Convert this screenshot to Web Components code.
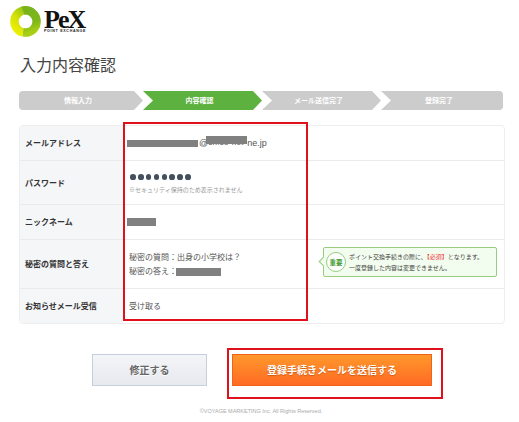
<!DOCTYPE html>
<html lang="ja"><head><meta charset="utf-8">
<style>
html,body{margin:0;padding:0;background:#fff}
body{font-family:"Liberation Sans","Noto Sans CJK JP",sans-serif;color:#444;width:519px;height:422px;overflow:hidden}
</style></head><body>
<pex-page></pex-page>
<script>
function def(name,css,html){
  customElements.define(name,class extends HTMLElement{
    constructor(){super();const r=this.attachShadow({mode:'open'});r.innerHTML='<style>'+css+'</style>'+html;}
  });
}
def('pex-logo',`:host{display:flex;align-items:flex-start;gap:3px;padding:6px 0 0 10px;height:33px}
 svg{display:block;flex:none}
 .w{display:flex;flex-direction:column;padding-top:2px}
 .p{font:bold 26px/24px "Liberation Serif",serif;color:#111;letter-spacing:-2px}
 .s{font:bold 3.6px/5px "Liberation Sans",sans-serif;color:#222;letter-spacing:.7px;white-space:nowrap;margin-top:-3px}`,
 `<svg width="31" height="31" viewBox="0 0 31 31"><defs>
   <linearGradient id="a" x1="0" y1="1" x2=".6" y2="0"><stop offset="0" stop-color="#eff000"/><stop offset=".55" stop-color="#d4e208"/><stop offset="1" stop-color="#a3cb12"/></linearGradient>
   <linearGradient id="b" x1=".3" y1="0" x2=".5" y2="1"><stop offset="0" stop-color="#79b31c"/><stop offset=".6" stop-color="#7fb71b"/><stop offset="1" stop-color="#a8cf14"/></linearGradient></defs>
   <path d="M17 4.4A11.2 11.2 0 0 0 13 26.4" fill="none" stroke="url(#a)" stroke-width="8.5"/>
   <path d="M13 4.7C14 4.3 15 4.3 15.5 4.3A11.2 11.2 0 0 1 17.5 26.5C16 26.7 15 26.7 13 26.4" fill="none" stroke="url(#b)" stroke-width="8.5"/>
 </svg>
 <div class="w"><div class="p">PeX</div><div class="s">POINT EXCHANGE</div></div>`);
def('pex-title',`:host{display:block;margin:13px 0 0 20px;font:400 16px/24px "Noto Sans CJK JP",sans-serif;color:#444}`,`<slot></slot>`);
def('pex-steps',`:host{display:flex;margin:15px 0 0 19px;width:484px;height:19px}`,`<slot></slot>`);
def('pex-step',`:host{display:flex;align-items:center;justify-content:center;box-sizing:border-box;flex:0 0 119px;height:19px;padding-right:6px;background:#ccc;color:#fff;font:bold 7px/19px "Noto Sans CJK JP",sans-serif;
  clip-path:polygon(0 0,calc(100% - 9px) 0,100% 50%,calc(100% - 9px) 100%,0 100%,10px 50%)}
 :host([active]){background:#5cb13f}
 :host([first]){flex-basis:124px;border-radius:4px 0 0 4px;clip-path:polygon(0 0,calc(100% - 9px) 0,100% 50%,calc(100% - 9px) 100%,0 100%)}
 :host([last]){flex-basis:122px;border-radius:0 4px 4px 0;clip-path:polygon(0 0,100% 0,100% 100%,0 100%,10px 50%)}`,`<slot></slot>`);
def('pex-table',`:host{display:block;box-sizing:border-box;margin:15px 0 0 19px;width:486px;border:1px solid #eee;border-radius:4px;overflow:hidden}`,`<slot></slot>`);
def('pex-row',`:host{display:grid;grid-template-columns:103px 1fr;border-bottom:1px solid #ebebeb;box-sizing:border-box;height:var(--h)}
 :host(:last-child){border-bottom:0}
 .l{background:#f5f6f8;display:flex;align-items:center;padding-left:5px;font:bold 8px/12px "Noto Sans CJK JP",sans-serif;color:#333}
 .v{display:flex;align-items:center;position:relative;padding-left:6px;font:400 8px/12px "Noto Sans CJK JP",sans-serif;color:#555}`,
 `<div class="l"><slot name="label"></slot></div><div class="v"><slot></slot></div>`);
def('pex-mask',`:host{display:inline-block;background:#808080;vertical-align:middle}`,``);
def('pex-note',`:host{display:flex;align-items:center;gap:3px;position:absolute;left:200px;top:7px;width:174px;height:30px;box-sizing:border-box;border:1px solid #97cc7f;border-radius:2px;background:#f3fdef;padding-left:2px;font:400 6px/11px "Noto Sans CJK JP",sans-serif;color:#444;white-space:nowrap}
 :host::before{content:"";position:absolute;left:-4px;top:10px;width:6px;height:6px;background:#f3fdef;border-left:1px solid #97cc7f;border-bottom:1px solid #97cc7f;transform:rotate(45deg)}
 .b{flex:none;position:relative;box-sizing:border-box;width:20px;height:20px;border:1px solid #97cc7f;border-radius:50%;background:#fff;color:#3a9a2a;font:bold 6.5px/18px "Noto Sans CJK JP",sans-serif;text-align:center}
 b{font-weight:400;color:#e33}`,
 `<span class="b">重要</span><div>ポイント交換手続きの際に、<b>【必須】</b>となります。<br>一度登録した内容は変更できません。</div>`);
def('pex-actions',`:host{display:flex;gap:25px;margin:30px 0 0 92px}`,`<slot></slot>`);
def('pex-btn',`:host{display:flex;align-items:center;justify-content:center;box-sizing:border-box;height:32px;width:115px;border:1px solid #c5d0da;background:linear-gradient(#f4f5f8,#e6e9ef);color:#666;font:bold 10px/1 "Noto Sans CJK JP",sans-serif;text-shadow:0 1px 0 #fff}
 :host([primary]){width:200px;border-color:#f2621a;background:linear-gradient(#ff982b,#ff6a24);color:#fff;text-shadow:0 1px 1px rgba(150,60,0,.5)}`,`<slot></slot>`);
def('pex-footer',`:host{display:block;text-align:center;margin-top:21px;padding-left:3px;font:400 5.5px/8px "Liberation Sans",sans-serif;color:#aaa}`,`<slot></slot>`);
def('pex-mark',`:host{position:absolute;box-sizing:border-box;border:2px solid #e0101c;pointer-events:none}`,``);
def('pex-page',`:host{display:block;position:relative;width:519px;height:422px}
 .email{white-space:nowrap;color:#555;margin-left:-2px;display:flex;align-items:center;font:400 9px/12px "Liberation Sans",sans-serif}
 .under{position:relative;display:inline-block;width:39px;white-space:nowrap;font-size:8px;letter-spacing:.3px}
 .under pex-mask{position:absolute;left:-2px;top:-1px;width:41px;height:7.5px}
 small{display:block;font-size:6px;line-height:10px;color:#999}
 .dots{display:flex;gap:2.2px;margin:0 0 5.5px 1px}
 .dots i{width:5.7px;height:5.7px;border-radius:50%;background:#445060}
 .pw{padding-top:4px}
 .q{line-height:14.5px}`,
 `<pex-logo></pex-logo>
 <pex-title>入力内容確認</pex-title>
 <pex-steps>
  <pex-step first>情報入力</pex-step><pex-step active>内容確認</pex-step><pex-step>メール送信完了</pex-step><pex-step last>登録完了</pex-step>
 </pex-steps>
 <pex-table>
  <pex-row style="--h:35px"><span slot="label">メールアドレス</span>
    <span class="email"><pex-mask style="width:71px;height:7px;margin-right:1px"></pex-mask>@<span class="under">ch.so-hot<pex-mask></pex-mask></span>ne.jp</span></pex-row>
  <pex-row style="--h:44px"><span slot="label">パスワード</span>
    <div class="pw"><div class="dots"><i></i><i></i><i></i><i></i><i></i><i></i><i></i><i></i></div><small>※セキュリティ保持のため表示されません</small></div></pex-row>
  <pex-row style="--h:35px"><span slot="label">ニックネーム</span>
    <pex-mask style="width:29px;height:8px;margin-left:-2px"></pex-mask></pex-row>
  <pex-row style="--h:49px"><span slot="label">秘密の質問と答え</span>
    <div class="q">秘密の質問：出身の小学校は？<br>秘密の答え：<pex-mask style="width:45px;height:8px;margin-left:-1px"></pex-mask></div><pex-note></pex-note></pex-row>
  <pex-row style="--h:34px"><span slot="label">お知らせメール受信</span>受け取る</pex-row>
 </pex-table>
 <pex-actions><pex-btn>修正する</pex-btn><pex-btn primary>登録手続きメールを送信する</pex-btn></pex-actions>
 <pex-footer>©VOYAGE MARKETING Inc. All Rights Reserved.</pex-footer>
 <pex-mark style="left:123px;top:122px;width:185px;height:199px"></pex-mark>
 <pex-mark style="left:227px;top:348px;width:216px;height:51px"></pex-mark>`);
</script>
</body></html>
